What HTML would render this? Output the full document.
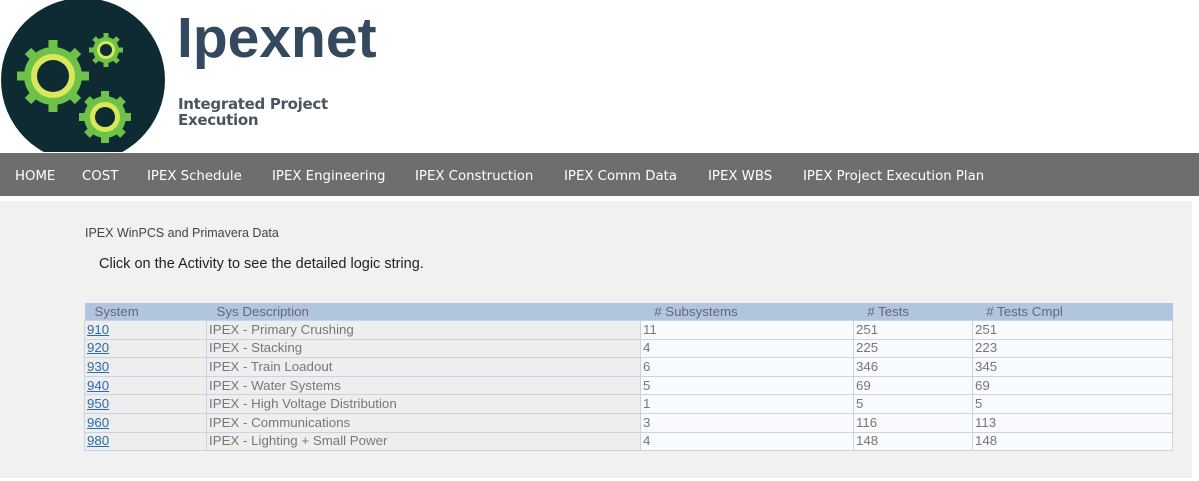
<!DOCTYPE html>
<html><head><meta charset="utf-8"><style>
body{margin:0;width:1199px;height:481px;background:#fff;font-family:"Liberation Sans",sans-serif;position:relative;overflow:hidden}
.logo{position:absolute;left:0;top:0;width:170px;height:152px;overflow:hidden}
.t1{position:absolute;left:177px;top:5px;font-size:57px;font-weight:bold;color:#34495e;letter-spacing:0px;font-family:"Liberation Sans",sans-serif}
.t2{position:absolute;left:178px;top:96px;font-size:15px;font-weight:bold;color:#4a5560;line-height:16px;font-family:"DejaVu Sans",sans-serif;letter-spacing:-0.3px}
.nav{position:absolute;left:0;top:153px;width:1199px;height:43px;background:#6e6e6e}
.nav span{position:absolute;top:16px;color:#fff;font-family:"DejaVu Sans",sans-serif;font-size:13.3px}
.content{position:absolute;left:0;top:201px;width:1192px;height:277px;background:#f1f1f1}
.h{position:absolute;left:85px;top:226px;font-size:12.5px;color:#444}
.click{position:absolute;left:99px;top:256px;font-size:14.5px;color:#222}
table{position:absolute;left:84px;top:303px;border-collapse:collapse;font-size:13.3px;color:#777}
th{background:#b1c5de;font-weight:normal;text-align:left;height:17px;padding:0 0 0 10px;color:#667}
td{height:17.6px;padding:0 0 0 2px;border:1px solid #c8d4e2;background:#f9fafc;line-height:16px}
td.d{background:#eee}
a{color:#2c6aa8}
</style></head><body>
<div class="logo"><svg width="170" height="152" viewBox="0 0 170 152">
<circle cx="83" cy="80" r="82" fill="#0e2b33"/>
<g fill="#6ec24a">
<circle cx="53" cy="76" r="29"/><circle cx="106" cy="50" r="13"/><circle cx="105" cy="117" r="21"/>
</g>
<g stroke="#6ec24a">
<path d="M53 40V112M17 76H89M28 51L78 101M78 51L28 101" stroke-width="9"/>
<path d="M105 91V143M79 117H131M87 99L123 135M123 99L87 135" stroke-width="8"/>
<path d="M106 33V67M89 50H123M94 38L118 62M118 38L94 62" stroke-width="5"/>
</g>
<circle cx="53" cy="76" r="22" fill="#d8e85a"/><circle cx="53" cy="76" r="16" fill="#0e2b33"/>
<circle cx="105" cy="117" r="15" fill="#d8e85a"/><circle cx="105" cy="117" r="10" fill="#0e2b33"/>
<circle cx="106" cy="50" r="9" fill="#d8e85a"/><circle cx="106" cy="50" r="6" fill="#0e2b33"/>
</svg></div>
<div class="t1">Ipexnet</div>
<div class="t2">Integrated Project<br>Execution</div>
<div class="nav">
<span style="left:15px">HOME</span><span style="left:82px">COST</span><span style="left:147px">IPEX Schedule</span><span style="left:272px">IPEX Engineering</span><span style="left:415px">IPEX Construction</span><span style="left:564px">IPEX Comm Data</span><span style="left:708px">IPEX WBS</span><span style="left:803px">IPEX Project Execution Plan</span>
</div>
<div class="content"></div>
<div class="h">IPEX WinPCS and Primavera Data</div>
<div class="click">Click on the Activity to see the detailed logic string.</div>
<table>
<tr><th style="width:112px">System</th><th style="width:424px">Sys Description</th><th style="width:203px">&nbsp;# Subsystems</th><th style="width:109px">&nbsp;# Tests</th><th style="width:190px">&nbsp;# Tests Cmpl</th></tr>
<tr><td class="d"><a href="#">910</a></td><td class="d">IPEX - Primary Crushing</td><td>11</td><td>251</td><td>251</td></tr>
<tr><td class="d"><a href="#">920</a></td><td class="d">IPEX - Stacking</td><td>4</td><td>225</td><td>223</td></tr>
<tr><td class="d"><a href="#">930</a></td><td class="d">IPEX - Train Loadout</td><td>6</td><td>346</td><td>345</td></tr>
<tr><td class="d"><a href="#">940</a></td><td class="d">IPEX - Water Systems</td><td>5</td><td>69</td><td>69</td></tr>
<tr><td class="d"><a href="#">950</a></td><td class="d">IPEX - High Voltage Distribution</td><td>1</td><td>5</td><td>5</td></tr>
<tr><td class="d"><a href="#">960</a></td><td class="d">IPEX - Communications</td><td>3</td><td>116</td><td>113</td></tr>
<tr><td class="d"><a href="#">980</a></td><td class="d">IPEX - Lighting + Small Power</td><td>4</td><td>148</td><td>148</td></tr>
</table>
</body></html>
